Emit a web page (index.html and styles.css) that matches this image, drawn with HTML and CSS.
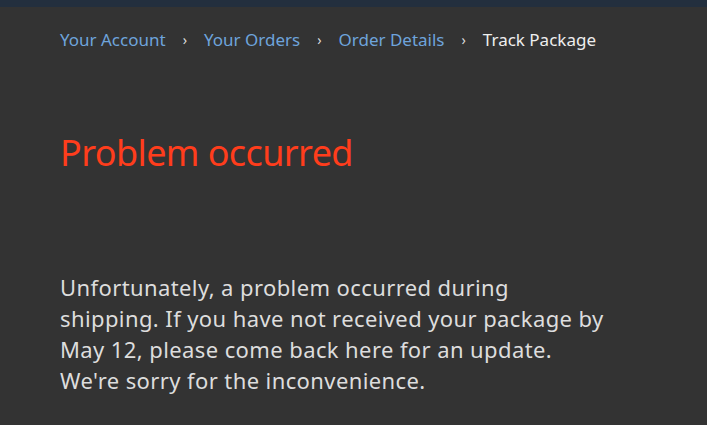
FILE: index.html
```html
<!DOCTYPE html>
<html lang="en">
<head>
    <meta charset="UTF-8">
    <link rel="stylesheet" href="styles.css">
</head>
<body>
    <div class="topbar"></div>
    <div class="page">
        <div class="crumbs">
            <a href="#">Your Account</a>
            <span class="sep">›</span>
            <a href="#">Your Orders</a>
            <span class="sep">›</span>
            <a href="#">Order Details</a>
            <span class="sep">›</span>
            <span class="current">Track Package</span>
        </div>
        <h1 class="title">Problem occurred</h1>
        <p class="message">Unfortunately, a problem occurred during shipping. If you have not received your package by May 12, please come back here for an update. We're sorry for the inconvenience.</p>
    </div>
</body>
</html>
```

FILE: styles.css
```css
body {
    margin: 0;
    background-color: #333333;
    font-family: "Noto Sans", "Open Sans", sans-serif;
    color: #dddddd;
}

.topbar {
    height: 7px;
    background-color: #232f3e;
}

.page {
    padding: 0 60px;
}

.crumbs {
    display: flex;
    align-items: center;
    gap: 17px;
    padding-top: 21px;
    font-size: 17px;
    line-height: 24px;
}

.crumbs a {
    color: #6ea4dc;
    text-decoration: none;
}

.sep {
    color: #dddddd;
    font-size: 14px;
}

.current {
    color: #eeeeee;
}

.title {
    margin: 77px 0 0 0;
    font-size: 36px;
    font-weight: 400;
    line-height: 48px;
    letter-spacing: -0.6px;
    color: #ff3d1c;
}

.message {
    margin: 95px 0 0 0;
    width: 550px;
    font-size: 22px;
    line-height: 31px;
    letter-spacing: 0.4px;
}
```
